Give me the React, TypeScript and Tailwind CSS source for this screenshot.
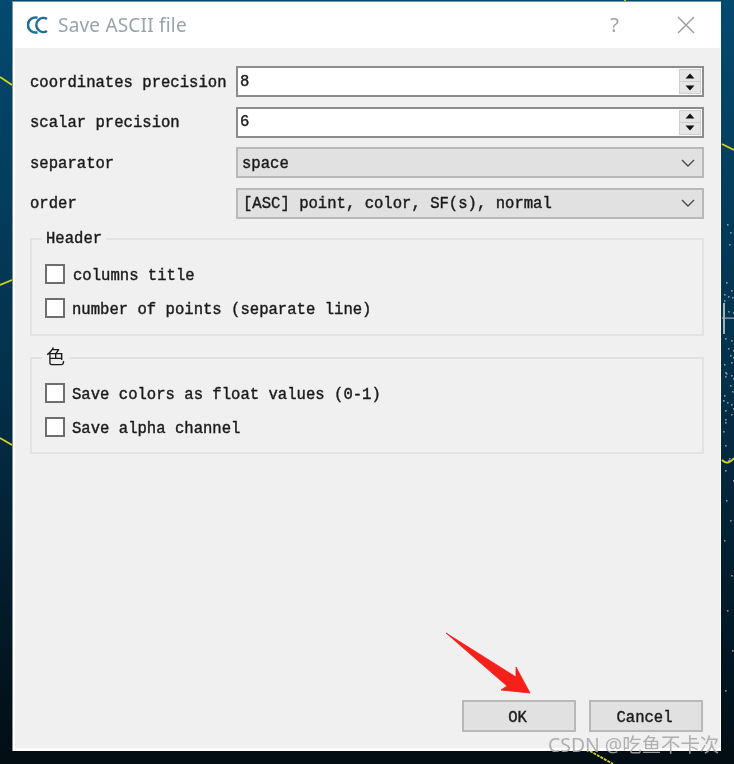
import React from "react";

const mono = "font-['Liberation_Mono',monospace] text-[15.6px] leading-none text-[#1a1a1a] [-webkit-text-stroke:0.4px_#1a1a1a] blur-[0.4px] whitespace-nowrap";

function Backdrop() {
  const dots: [number, number][] = [
    [727, 224],[730, 232],[729, 244],[726, 282],[731, 290],[724, 294],[728, 296],[732, 297],[724, 300],[728, 311],[733, 312],
    [725, 338],[731, 340],[728, 348],[733, 350],[730, 355],[733, 357],[731, 362],[724, 364],[725, 372],[725, 376],
    [726, 373],[731, 375],[733, 378],[730, 385],[732, 391],[724, 395],[723, 400],[727, 402],[731, 404],[725, 410],
    [733, 408],[731, 414],[725, 419],[725, 422],[723, 431],[725, 445],[729, 458],[725, 470],
    [728, 460],[733, 480],[726, 500],[730, 520],[724, 540],[731, 575],[727, 610],[732, 650],[725, 690],
  ];
  return (
    <svg className="absolute inset-0" width="734" height="764" viewBox="0 0 734 764">
      <g stroke="#d4d41c" strokeWidth="1.8" fill="none">
        <path d="M0 77 L12 85" />
        <path d="M0 285 L12 280" />
        <path d="M0 438 L12 445" />
        <path d="M722 144 L734 150" />
        <path d="M722 460 Q728 466 734 458" />
        <path d="M590 751 L613 764" strokeDasharray="3 1" />
        <path d="M625 0 L625 2" />
      </g>
      <g fill="#9fb2bf" opacity="0.8">
        {dots.map(([x, y], i) => (
          <rect key={i} x={x} y={y} width="1.6" height="1.6" />
        ))}
      </g>
      <rect x="723" y="303" width="2" height="31" fill="#a5b0b8" />
      <rect x="722" y="317.5" width="12" height="1.2" fill="#a5b0b8" />
    </svg>
  );
}

function Spin({ value }: { value: string }) {
  return (
    <div className="h-full flex-1 flex items-center border-2 border-[#8c8c8c] bg-white pl-[2px] pr-[1px]">
      <span className={`${mono} flex-1 pt-[2px]`}>{value}</span>
      <div className="w-[22px] h-[25px] flex flex-col bg-[#e6e6e6] border border-[#cfcfcf]">
        <div className="flex-1 flex items-center justify-center border-b border-[#cfcfcf]">
          <svg width="10" height="6" viewBox="0 0 10 6"><path d="M5 0.5 L9.5 5.5 H0.5 Z" fill="#111" /></svg>
        </div>
        <div className="flex-1 flex items-center justify-center">
          <svg width="10" height="6" viewBox="0 0 10 6"><path d="M0.5 0.5 H9.5 L5 5.5 Z" fill="#111" /></svg>
        </div>
      </div>
    </div>
  );
}

function Combo({ value, pl }: { value: string; pl: string }) {
  return (
    <div className={`h-full flex-1 flex items-center border-2 border-[#b8b8b8] bg-[#e1e1e1] ${pl} pr-[7px]`}>
      <span className={`${mono} flex-1 pt-[4px]`}>{value}</span>
      <svg width="14" height="8" viewBox="0 0 14 8" fill="none" stroke="#4a4a4a" strokeWidth="1.4">
        <path d="M1 1 L7 7 L13 1" />
      </svg>
    </div>
  );
}

function Row({ label, children }: { label: string; children: React.ReactNode }) {
  return (
    <div className="h-[31px] flex items-center">
      <span className={`${mono} w-[206px] pt-[4px]`}>{label}</span>
      {children}
    </div>
  );
}

function Check({ label, ml }: { label: string; ml: string }) {
  return (
    <div className="h-[20px] flex items-center">
      <div className="w-[20px] h-[20px] border-2 border-[#6e6e6e] bg-white shrink-0" />
      <span className={`${mono} ${ml} pt-[7px]`}>{label}</span>
    </div>
  );
}

function Group({ title, cjk, h, children }: { title: string; cjk?: boolean; h: string; children: React.ReactNode }) {
  return (
    <div className={`relative ${h} border-2 border-[#e2e2e2] pl-[13px] pt-[24px] flex flex-col gap-[14px]`}>
      {cjk ? (
        <span className="absolute left-[10px] -top-[13px] bg-[#f0f0f0] px-[4px] h-[22px] flex items-center font-['Noto_Sans_CJK_SC',sans-serif] text-[19px] text-[#1a1a1a] blur-[0.3px]">
          {title}
        </span>
      ) : (
        <span className="absolute left-[10px] -top-[10px] bg-[#f0f0f0] px-[4px] h-[20px] flex items-center">
          <span className={mono}>{title}</span>
        </span>
      )}
      {children}
    </div>
  );
}

function Btn({ label }: { label: string }) {
  return (
    <div className="w-[114px] h-[32px] border-2 border-[#b8b8b8] bg-[#e1e1e1] flex items-center justify-center pr-[3px]">
      <span className={`${mono} pt-[6px]`}>{label}</span>
    </div>
  );
}

export default function App() {
  return (
    <div className="relative w-[734px] h-[764px] overflow-hidden bg-gradient-to-b from-[#034a70] via-[#03304a] to-[#020d14]">
      <Backdrop />
      <div className="absolute left-[12px] top-[1px] w-[709px] h-[750px] border-l border-t border-[#8a8f94] flex flex-col bg-white">
        <div className="h-[46px] shrink-0 flex items-center pl-[14px] pr-[26px]">
          <svg width="22" height="20" viewBox="0 0 22 20" fill="none" stroke="#1f6f9e" strokeWidth="2.6" className="blur-[0.4px]">
            <path d="M10.5 2.8 A7.5 7.5 0 1 0 10.5 17.2" />
            <path d="M20 4 A7 7 0 1 0 20 16" />
          </svg>
          <span className="ml-[9px] font-['Noto_Sans',sans-serif] text-[19px] tracking-[0.2px] text-[#9aa3ab] blur-[0.4px]">Save ASCII file</span>
          <span className="ml-auto font-['Noto_Sans',sans-serif] text-[20px] text-[#a0a0a0] blur-[0.4px]">?</span>
          <svg width="18" height="18" viewBox="0 0 18 18" stroke="#9a9a9a" strokeWidth="1.4" className="ml-[58px]">
            <path d="M1 1 L17 17 M17 1 L1 17" />
          </svg>
        </div>
        <div className="flex-1 ml-[2px] mr-[1px] mb-[3px] bg-[#f0f0f0] pl-[15px] pr-[16px] pt-[18px] flex flex-col">
          <div className="flex flex-col gap-[9.5px]">
            <Row label="coordinates precision"><Spin value="8" /></Row>
            <Row label="scalar precision"><Spin value="6" /></Row>
            <Row label="separator"><Combo value="space" pl="pl-[4px]" /></Row>
            <Row label="order"><Combo value="[ASC] point, color, SF(s), normal" pl="pl-[5px]" /></Row>
          </div>
          <div className="mt-[19px] flex flex-col gap-[21px]">
            <Group title="Header" h="h-[98px]">
              <Check label="columns title" ml="ml-[8px]" />
              <Check label="number of points (separate line)" ml="ml-[7px]" />
            </Group>
            <Group title="色" cjk h="h-[97px]">
              <Check label="Save colors as float values (0-1)" ml="ml-[7px]" />
              <Check label="Save alpha channel" ml="ml-[7px]" />
            </Group>
          </div>
          <div className="mt-auto mr-[1px] mb-[16px] flex justify-end gap-[13px]">
            <Btn label="OK" />
            <Btn label="Cancel" />
          </div>
        </div>
      </div>
      <svg className="absolute left-0 top-0 pointer-events-none" width="734" height="764" viewBox="0 0 734 764">
        <path d="M446 633 L516 677 L516 667 L530 693 L501 690 L507 686 Z" fill="#f5201a" stroke="#f5201a" strokeWidth="0.8" strokeLinejoin="round" />
      </svg>
      <span className="absolute left-[548px] top-[733px] font-['Noto_Sans','Noto_Sans_CJK_SC',sans-serif] text-[19.4px] leading-[24px] text-[#a8a8a8]/90 whitespace-nowrap blur-[0.3px]">
        CSDN @吃鱼不卡次
      </span>
    </div>
  );
}
